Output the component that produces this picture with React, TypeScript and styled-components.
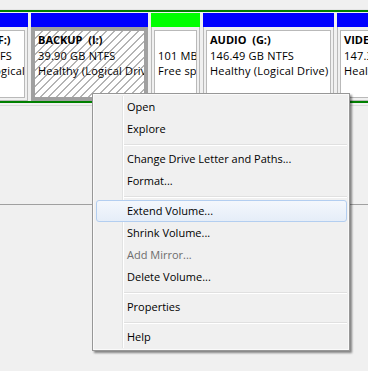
import React from "react";
import styled, { createGlobalStyle, css } from "styled-components";

const GlobalStyle = createGlobalStyle`
  html, body {
    margin: 0;
    padding: 0;
  }
  body {
    background: #f0f0f0;
    font-family: "Open Sans", "Noto Sans", sans-serif;
    font-size: 11px;
    color: #000;
  }
`;

const Screen = styled.div`
  position: relative;
  width: 368px;
  height: 371px;
  overflow: hidden;
  background: #f0f0f0;
`;

const TopGap = styled.div`
  box-sizing: border-box;
  height: 10px;
  border-bottom: 1px solid #e4e4e4;
`;

const Extended = styled.div`
  border-top: 2px solid #008000;
  border-bottom: 2px solid #008000;
  padding-top: 1px;
`;

// the disk view is scrolled: the first volume starts left of the window
const Strip = styled.div`
  display: flex;
  gap: 3px;
  margin-left: -66px;
`;

const Cell = styled.div<{ $w: number }>`
  flex: 0 0 ${(p) => p.$w}px;
  display: flex;
  flex-direction: column;
  min-width: 0;
`;

const Header = styled.div<{ $free?: boolean }>`
  height: 14px;
  background: ${(p) => (p.$free ? "#00ff00" : "#0000ff")};
`;

const Body = styled.div<{ $selected?: boolean }>`
  height: 74px;
  box-sizing: border-box;
  display: flex;
  border: 1px solid ${(p) => (p.$selected ? "#a0a0a0" : "#b9b9b9")};
  border-top: none;
  padding: 3px 2px 2px;
  background: ${(p) => (p.$selected ? "#a0a0a0" : "#f0f0f0")};
`;

const Volume = styled.div<{ $selected?: boolean }>`
  flex: 1;
  min-width: 0;
  overflow: hidden;
  white-space: pre;
  line-height: 15.5px;
  letter-spacing: 0.2px;
  padding: 1px 3px;
  border: 1px solid ${(p) => (p.$selected ? "#a0a0a0" : "#b9b9b9")};
  background: #fff;
  ${(p) =>
    p.$selected &&
    css`
      background: repeating-linear-gradient(
        135deg,
        #ffffff 0px,
        #ffffff 4.8px,
        #b4b4b4 4.8px,
        #b4b4b4 5.66px
      );
    `}
`;

const Name = styled.div`
  font-weight: 700;
  letter-spacing: 0;
`;

const Line = styled.div``;

const Divider = styled.div`
  height: 1px;
  margin-top: 2px;
  background: #dadada;
`;

const NextDisk = styled.div`
  margin-top: 98px;
  border-top: 1px solid #a0a0a0;
`;

const Menu = styled.div`
  position: absolute;
  left: 92px;
  top: 93px;
  width: 258px;
  box-sizing: border-box;
  padding: 2px 2px 2px 3px;
  border: 1px solid #979797;
  background: #f0f0f0;
  box-shadow: inset 0 0 0 1px #fafafa, 2px 2px 2px rgba(0, 0, 0, 0.45);

  &::before {
    content: "";
    position: absolute;
    left: 29px;
    top: 2px;
    bottom: 2px;
    width: 1px;
    background: #e2e3e3;
    border-right: 1px solid #ffffff;
  }
`;

const Item = styled.div<{ $hot?: boolean; $disabled?: boolean }>`
  position: relative;
  height: 22px;
  box-sizing: border-box;
  line-height: 20px;
  padding-left: 30px;
  border: 1px solid transparent;
  border-radius: 3px;
  color: ${(p) => (p.$disabled ? "#6d6d6d" : "#000")};
  white-space: nowrap;
  ${(p) =>
    p.$hot &&
    css`
      border-color: #b3cef0;
      background: linear-gradient(#f4f7fc, #e5edf8);
    `}
`;

const Separator = styled.div`
  height: 8px;
  margin-left: 27px;
  box-sizing: border-box;
  padding-top: 4px;

  &::after {
    content: "";
    display: block;
    height: 1px;
    background: #e0e0e0;
    border-bottom: 1px solid #ffffff;
  }
`;

type Part = {
  w: number;
  free?: boolean;
  selected?: boolean;
  name?: string;
  size: string;
  status: string;
};

const parts: Part[] = [
  { w: 94, name: "ARCHIVE  (F:)", size: "7.81 GB NTFS", status: "Healthy (Logical Drive)" },
  { w: 117, selected: true, name: "BACKUP  (I:)", size: "39.90 GB NTFS", status: "Healthy (Logical Drive)" },
  { w: 49, free: true, size: "101 MB", status: "Free space" },
  { w: 131, name: "AUDIO  (G:)", size: "146.49 GB NTFS", status: "Healthy (Logical Drive)" },
  { w: 131, name: "VIDEO  (H:)", size: "147.33 GB NTFS", status: "Healthy (Logical Drive)" },
];

type Entry = { label: string; hot?: boolean; disabled?: boolean } | "sep";

const entries: Entry[] = [
  { label: "Open" },
  { label: "Explore" },
  "sep",
  { label: "Change Drive Letter and Paths..." },
  { label: "Format..." },
  "sep",
  { label: "Extend Volume...", hot: true },
  { label: "Shrink Volume..." },
  { label: "Add Mirror...", disabled: true },
  { label: "Delete Volume..." },
  "sep",
  { label: "Properties" },
  "sep",
  { label: "Help" },
];

export default function App() {
  return (
    <>
      <GlobalStyle />
      <Screen>
        <TopGap />
        <Extended>
          <Strip>
            {parts.map((p, i) => (
              <Cell key={i} $w={p.w}>
                <Header $free={p.free} />
                <Body $selected={p.selected}>
                  <Volume $selected={p.selected}>
                    <Name>{p.name ?? " "}</Name>
                    <Line>{p.size}</Line>
                    <Line>{p.status}</Line>
                  </Volume>
                </Body>
              </Cell>
            ))}
          </Strip>
        </Extended>
        <Divider />
        <NextDisk />
        <Menu>
          {entries.map((e, i) =>
            e === "sep" ? (
              <Separator key={i} />
            ) : (
              <Item key={i} $hot={e.hot} $disabled={e.disabled}>
                {e.label}
              </Item>
            )
          )}
        </Menu>
      </Screen>
    </>
  );
}
